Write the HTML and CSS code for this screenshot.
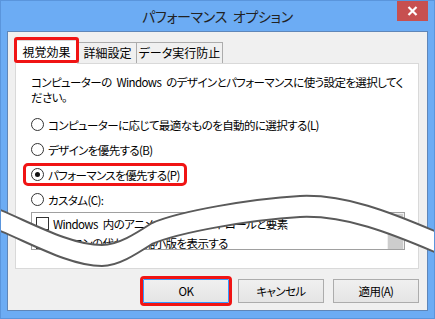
FILE: index.html
```html
<!DOCTYPE html>
<html lang="ja">
<head>
    <meta charset="UTF-8">
    <title>パフォーマンス オプション</title>
    <link rel="stylesheet" href="styles.css">
</head>
<body>
    <div class="window">
        <div class="titlebar">
            <span></span>
            <h1 class="title">パフォーマンス オプション</h1>
            <div class="close">
                <svg width="11" height="10" viewBox="0 0 11 10">
                    <path d="M1.5 1 L9.5 9 M9.5 1 L1.5 9" stroke="#fff" stroke-width="2.2"/>
                </svg>
            </div>
        </div>

        <div class="client">
            <!-- タブ -->
            <div class="tabs">
                <div class="tab active">視覚効果</div>
                <div class="tab">詳細設定</div>
                <div class="tab third">データ実行防止</div>
            </div>

            <div class="panel">
                <p class="desc">コンピューターの Windows のデザインとパフォーマンスに使う設定を選択してく<br>ださい。</p>

                <div class="options">
                    <div class="radio"><span class="circle"></span>コンピューターに応じて最適なものを自動的に選択する(L)</div>
                    <div class="radio"><span class="circle"></span>デザインを優先する(B)</div>
                    <div class="radio marked"><span class="circle checked"></span>パフォーマンスを優先する(P)</div>
                    <div class="radio"><span class="circle"></span>カスタム(C):</div>
                </div>

                <div class="listbox">
                    <div class="items">
                        <div class="item"><span class="check"></span>Windows 内のアニメーション コントロールと要素</div>
                        <div class="item"><span class="check"></span>アイコンの代わりに縮小版を表示する</div>
                    </div>
                    <div class="scrollbar"><div class="thumb"></div></div>
                </div>
            </div>

            <div class="buttons">
                <div class="btn default">OK</div>
                <div class="btn">キャンセル</div>
                <div class="btn">適用(A)</div>
            </div>
        </div>

        <!-- 省略を示す波線 -->
        <svg class="wave" width="435" height="319" viewBox="0 0 435 319">
            <path d="M-2,209 C30,222 70,245 102,245 C118,245 135,234 152,223 C180,211 250,199 300,196 C345,194 390,212 437,232
                     L437,253 C390,233 345,215 300,217 C250,220 180,232 152,244 C135,255 118,266 102,266 C70,266 30,243 -2,230 Z" fill="#fff"/>
            <path d="M-2,209 C30,222 70,245 102,245 C118,245 135,234 152,223 C180,211 250,199 300,196 C345,194 390,212 437,232" fill="none" stroke="#5a5a5a" stroke-width="2"/>
            <path d="M-2,230 C30,243 70,266 102,266 C118,266 135,255 152,244 C180,232 250,220 300,217 C345,215 390,233 437,253" fill="none" stroke="#5a5a5a" stroke-width="2"/>
        </svg>
    </div>
</body>
</html>
```

FILE: styles.css
```css
body {
    margin: 0;
    font-family: "Noto Sans CJK JP", "Noto Sans", sans-serif;
    font-feature-settings: "palt";
    font-size: 11.5px;
    letter-spacing: -0.6px;
    word-spacing: 3px;
    color: #000;
}
.window {
    position: relative;
    width: 435px;
    height: 319px;
    box-sizing: border-box;
    border: 1px solid #5a95dc;
    background: #6cacf4;
    display: flex;
    flex-direction: column;
    overflow: hidden;
}
.titlebar {
    height: 30px;
    display: grid;
    grid-template-columns: 1fr auto 1fr;
}
.title {
    margin: 0;
    font-size: 14px;
    font-weight: normal;
    letter-spacing: -0.3px;
    color: #222;
    line-height: 30px;
}
.close {
    justify-self: end;
    width: 31px;
    height: 20px;
    margin-right: 6px;
    background: #c75050;
    display: flex;
    align-items: center;
    justify-content: center;
}
.client {
    height: 280px;
    margin: 0 6px;
    box-sizing: border-box;
    border: 1px solid #5f86b8;
    background: #f0f0f0;
    padding: 8px 8px 0 7px;
}

/* タブ */
.tabs {
    display: flex;
    align-items: flex-end;
    height: 23px;
}
.tab {
    height: 21px;
    box-sizing: border-box;
    border: 1px solid #acacac;
    border-bottom: none;
    background: #f0f0f0;
    font-size: 12px;
    letter-spacing: 0;
    line-height: 20px;
    text-align: center;
    width: 59px;
}
.tab.third {
    width: 87px;
    margin-left: -1px;
}
.tab.active {
    position: relative;
    z-index: 1;
    width: 63px;
    height: 24px;
    margin-bottom: -1px;
    background: #fff;
    border-color: #d9d9d9;
    line-height: 21px;
}
.tab.active::after {
    content: "";
    position: absolute;
    top: -4px;
    left: -2px;
    right: -2px;
    bottom: 1px;
    border: 3px solid #f01414;
    border-radius: 3px;
}
.panel {
    height: 206px;
    box-sizing: border-box;
    border: 1px solid #d9d9d9;
    background: #fff;
    padding: 11px 0 0 15px;
}
.desc {
    margin: 0;
    line-height: 15px;
    white-space: nowrap;
}
.options {
    display: flex;
    flex-direction: column;
    align-items: flex-start;
    gap: 8px;
    margin: 11px 0 0 -5px;
}
.radio {
    display: flex;
    align-items: center;
    gap: 4px;
    height: 17px;
    padding: 0 4px 0 5px;
}
.radio.marked {
    outline: 3px solid #f01414;
    border-radius: 2px;
}
.circle {
    width: 13px;
    height: 13px;
    box-sizing: border-box;
    border: 1px solid #333;
    border-radius: 50%;
    background: #fff;
    display: flex;
    align-items: center;
    justify-content: center;
}
.circle.checked::before {
    content: "";
    width: 5px;
    height: 5px;
    border-radius: 50%;
    background: #111;
}
.listbox {
    display: flex;
    width: 374px;
    height: 38px;
    margin-top: 4px;
    box-sizing: border-box;
    border: 1px solid #a0a0a0;
}
.items {
    flex: 1;
    padding: 1px 0 0 4px;
}
.item {
    display: flex;
    align-items: center;
    gap: 4px;
    height: 19px;
}
.check {
    width: 13px;
    height: 13px;
    box-sizing: border-box;
    border: 1px solid #333;
    background: #fff;
}
.scrollbar {
    width: 17px;
    background: #f0f0f0;
    padding: 1px 1px 0 1px;
    box-sizing: border-box;
}
.thumb {
    height: 100%;
    background: #cdcdcd;
}

/* ボタン */
.buttons {
    display: flex;
    justify-content: flex-end;
    gap: 9px;
    margin-top: 10px;
}
.btn {
    width: 86px;
    height: 24px;
    box-sizing: border-box;
    border: 1px solid #acacac;
    background: linear-gradient(#f0f0f0, #e5e5e5);
    display: flex;
    align-items: center;
    justify-content: center;
}
.btn.default {
    border-color: #3399ff;
    outline: 3px solid #f01414;
    border-radius: 1px;
}
.wave {
    position: absolute;
    left: -1px;
    top: -1px;
    pointer-events: none;
}
```
